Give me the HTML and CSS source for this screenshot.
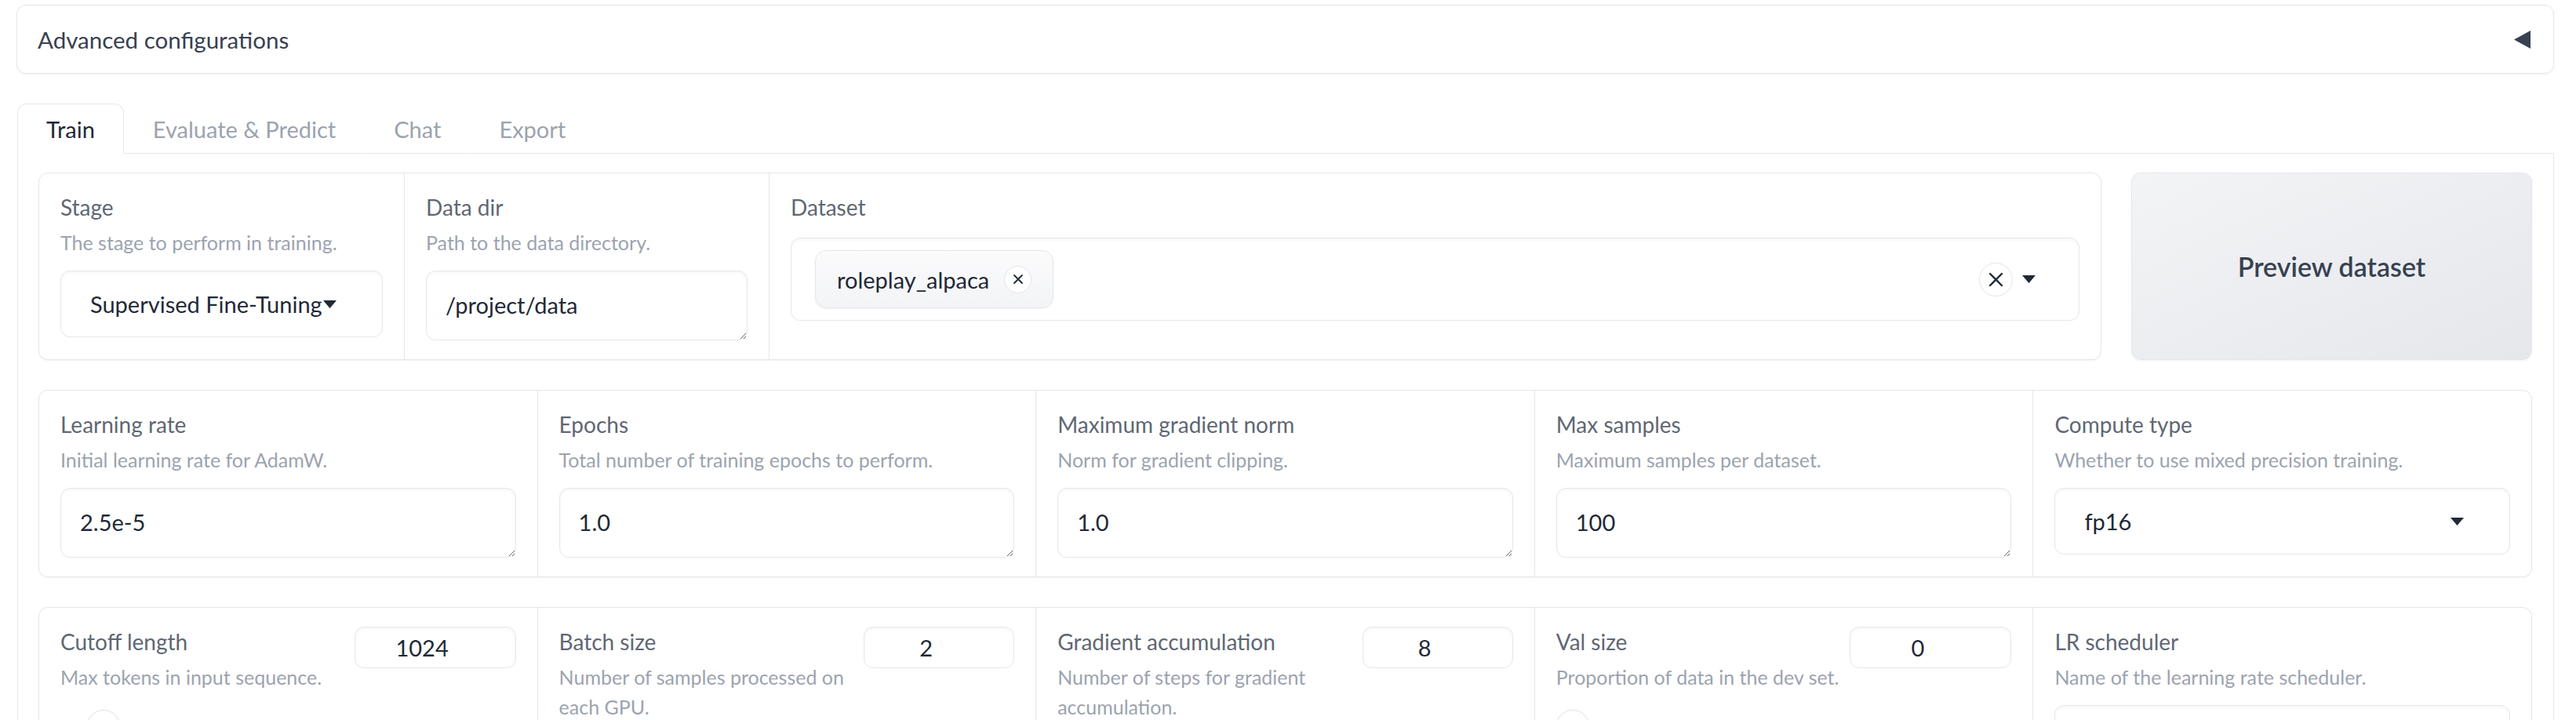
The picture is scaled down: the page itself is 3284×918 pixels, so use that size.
FILE: index.html
```html
<!DOCTYPE html>
<html lang="en">
<head>
<meta charset="utf-8">
<title>Advanced configurations</title>
<link rel="stylesheet" href="styles.css">
</head>
<body>
<div class="page">
  <div class="accordion">
    <span class="accordion-label">Advanced configurations</span>
    <svg class="accordion-icon" width="21" height="23" viewBox="0 0 21 23"><path d="M21 0V23L0 11.5Z"/></svg>
  </div>

  <div class="tabs">
    <div class="tab-nav">
      <button class="tab is-selected">Train</button>
      <button class="tab">Evaluate &amp; Predict</button>
      <button class="tab">Chat</button>
      <button class="tab">Export</button>
      <div class="tab-rest"></div>
    </div>

    <div class="tab-panel">
      <div class="row">
        <div class="group group-data">
          <div class="cell cell-stage">
            <div class="field-head">
              <div class="label">Stage</div>
              <div class="info">The stage to perform in training.</div>
            </div>
            <div class="dropdown">
              <span class="dropdown-value">Supervised Fine-Tuning</span>
              <svg class="caret" width="17" height="10" viewBox="0 0 17 10"><path d="M0 0H17L8.5 10Z"/></svg>
            </div>
          </div>
          <div class="cell cell-dir">
            <div class="field-head">
              <div class="label">Data dir</div>
              <div class="info">Path to the data directory.</div>
            </div>
            <textarea class="textbox" rows="1">/project/data</textarea>
          </div>
          <div class="cell cell-dataset">
            <div class="field-head label-only">
              <div class="label">Dataset</div>
            </div>
            <div class="multiselect">
              <span class="chip">roleplay_alpaca
                <span class="chip-remove"><svg width="14" height="14" viewBox="0 0 14 14"><path d="M2 2L12 12M12 2L2 12"/></svg></span>
              </span>
              <span class="spacer"></span>
              <span class="clear-btn"><svg width="19" height="19" viewBox="0 0 19 19"><path d="M2 2L17 17M17 2L2 17"/></svg></span>
              <svg class="caret" width="17" height="10" viewBox="0 0 17 10"><path d="M0 0H17L8.5 10Z"/></svg>
            </div>
          </div>
        </div>
        <button class="preview">Preview dataset</button>
      </div>

      <div class="row">
        <div class="group group-five">
          <div class="cell">
            <div class="field-head">
              <div class="label">Learning rate</div>
              <div class="info">Initial learning rate for AdamW.</div>
            </div>
            <textarea class="textbox" rows="1">2.5e-5</textarea>
          </div>
          <div class="cell">
            <div class="field-head">
              <div class="label">Epochs</div>
              <div class="info">Total number of training epochs to perform.</div>
            </div>
            <textarea class="textbox" rows="1">1.0</textarea>
          </div>
          <div class="cell">
            <div class="field-head">
              <div class="label">Maximum gradient norm</div>
              <div class="info">Norm for gradient clipping.</div>
            </div>
            <textarea class="textbox" rows="1">1.0</textarea>
          </div>
          <div class="cell">
            <div class="field-head">
              <div class="label">Max samples</div>
              <div class="info">Maximum samples per dataset.</div>
            </div>
            <textarea class="textbox" rows="1">100</textarea>
          </div>
          <div class="cell">
            <div class="field-head">
              <div class="label">Compute type</div>
              <div class="info">Whether to use mixed precision training.</div>
            </div>
            <div class="dropdown">
              <span class="dropdown-value">fp16</span>
              <svg class="caret" width="17" height="10" viewBox="0 0 17 10"><path d="M0 0H17L8.5 10Z"/></svg>
            </div>
          </div>
        </div>
      </div>

      <div class="row">
        <div class="group group-five">
          <div class="cell">
            <div class="slider-head">
              <div class="field-head">
                <div class="label">Cutoff length</div>
                <div class="info">Max tokens in input sequence.</div>
              </div>
              <input class="num num-wide" type="number" value="1024">
            </div>
            <input class="range" type="range" min="4" max="16384" value="1024">
          </div>
          <div class="cell">
            <div class="slider-head">
              <div class="field-head">
                <div class="label">Batch size</div>
                <div class="info">Number of samples processed on<br>each GPU.</div>
              </div>
              <input class="num num-narrow" type="number" value="2">
            </div>
            <input class="range" type="range" min="1" max="1024" value="2">
          </div>
          <div class="cell">
            <div class="slider-head">
              <div class="field-head">
                <div class="label">Gradient accumulation</div>
                <div class="info">Number of steps for gradient<br>accumulation.</div>
              </div>
              <input class="num num-narrow" type="number" value="8">
            </div>
            <input class="range" type="range" min="1" max="1024" value="8">
          </div>
          <div class="cell">
            <div class="slider-head">
              <div class="field-head">
                <div class="label">Val size</div>
                <div class="info">Proportion of data in the dev set.</div>
              </div>
              <input class="num num-wide" type="number" value="0">
            </div>
            <input class="range" type="range" min="0" max="1" step="0.001" value="0">
          </div>
          <div class="cell">
            <div class="field-head">
              <div class="label">LR scheduler</div>
              <div class="info">Name of the learning rate scheduler.</div>
            </div>
            <div class="dropdown">
              <span class="dropdown-value"></span>
              <svg class="caret" width="17" height="10" viewBox="0 0 17 10"><path d="M0 0H17L8.5 10Z"/></svg>
            </div>
          </div>
        </div>
      </div>
    </div>
  </div>
</div>
</body>
</html>
```

FILE: styles.css
```css
* {
  box-sizing: border-box;
}

html,
body {
  margin: 0;
  background: #ffffff;
}

body {
  font-family: Lato, "Open Sans", sans-serif;
  color: #1f2937;
}

.page {
  padding: 6px 28px 0 21px;
}

/* Accordion */
.accordion {
  display: flex;
  align-items: center;
  justify-content: space-between;
  height: 88px;
  padding: 0 29px 0 26px;
  border: 1px solid #e5e7eb;
  border-radius: 12px;
  box-shadow: 0 1px 3px rgba(0, 0, 0, 0.06);
}

.accordion-label {
  font-size: 29.5px;
  color: #374151;
}

.accordion-icon {
  display: block;
  fill: #374151;
}

/* Tabs */
.tabs {
  margin: 38px 0 0 1px;
}

.tab-nav {
  display: flex;
  height: 64px;
}

.tab {
  height: 64px;
  margin: 0;
  padding: 0 36px;
  border: 1px solid transparent;
  border-bottom-color: #e5e7eb;
  background: none;
  font-family: Lato, "Open Sans", sans-serif;
  font-size: 29px;
  color: #9ca3af;
}

.tab.is-selected {
  border-color: #e5e7eb;
  border-bottom-color: #ffffff;
  border-radius: 12px 12px 0 0;
  background: #ffffff;
  color: #1f2937;
}

.tab-rest {
  flex: 1;
  border-bottom: 1px solid #e5e7eb;
}

.tab-panel {
  display: flex;
  flex-direction: column;
  gap: 38px;
  padding: 24px 27px 30px 26px;
  border: 1px solid #e5e7eb;
  border-top: none;
  border-radius: 0 0 12px 12px;
}

/* Rows & groups */
.row {
  display: flex;
  gap: 38px;
}

.group {
  flex: 1;
  display: flex;
  min-width: 0;
  border: 1px solid #e5e7eb;
  border-radius: 12px;
  background: #ffffff;
  box-shadow: 0 1px 2px rgba(0, 0, 0, 0.05);
}

.cell {
  min-width: 0;
  padding: 24px 27px;
  border-right: 1px solid #e5e7eb;
}

.cell:last-child {
  border-right: none;
}

.cell-stage {
  flex: none;
  width: 466px;
}

.cell-dir {
  flex: none;
  width: 465px;
}

.cell-dataset {
  flex: 1;
}

.group-five .cell {
  flex: 1;
}

/* Labels */
.field-head {
  margin-bottom: 17px;
}

.field-head.label-only {
  margin-bottom: 20px;
}

.label {
  font-size: 28px;
  line-height: 38px;
  color: #5f6774;
  white-space: nowrap;
}

.info {
  margin-top: 7px;
  font-size: 25px;
  line-height: 38px;
  color: #9ca3af;
}

/* Dropdown */
.dropdown {
  display: flex;
  align-items: center;
  height: 85px;
  padding: 0 58px 0 37px;
  border: 1px solid #e5e7eb;
  border-radius: 12px;
  box-shadow: inset 0 2px 4px rgba(0, 0, 0, 0.04);
  font-size: 29px;
  color: #1f2937;
}

.dropdown-value {
  flex: 1;
  min-width: 0;
  overflow: hidden;
  white-space: nowrap;
}

.caret {
  flex: none;
  display: block;
  fill: #1f2937;
}

/* Multiselect */
.multiselect {
  display: flex;
  align-items: center;
  gap: 12px;
  padding: 15px 55px 15px 30px;
  border: 1px solid #e5e7eb;
  border-radius: 12px;
  box-shadow: inset 0 2px 4px rgba(0, 0, 0, 0.04);
}

.chip {
  display: flex;
  align-items: center;
  gap: 19px;
  height: 74px;
  padding: 0 27px;
  border: 1px solid #e5e7eb;
  border-radius: 14px;
  background: linear-gradient(to top, #f3f4f6, #fbfbfc);
  font-size: 29px;
  color: #1f2937;
  box-shadow: 0 1px 2px rgba(0, 0, 0, 0.04);
}

.chip-remove {
  display: flex;
  align-items: center;
  justify-content: center;
  width: 35px;
  height: 35px;
  border: 1px solid #e2e4e9;
  border-radius: 50%;
  background: #ffffff;
}

.chip-remove svg,
.clear-btn svg {
  display: block;
  fill: none;
  stroke: #1f2937;
  stroke-width: 1.8;
  stroke-linecap: round;
}

.clear-btn svg {
  stroke-width: 2.4;
}

.spacer {
  flex: 1;
}

.clear-btn {
  display: flex;
  align-items: center;
  justify-content: center;
  width: 43px;
  height: 43px;
  border: 1px solid #e2e4e9;
  border-radius: 50%;
  background: #ffffff;
}

/* Textbox */
.textbox {
  display: block;
  width: 100%;
  height: 89px;
  margin: 0;
  padding: 23px 24px;
  border: 1px solid #e5e7eb;
  border-radius: 12px;
  box-shadow: inset 0 2px 4px rgba(0, 0, 0, 0.04);
  font-family: Lato, "Open Sans", sans-serif;
  font-size: 29px;
  line-height: 40px;
  color: #1f2937;
  background: #ffffff;
  resize: vertical;
  outline: none;
}

/* Button */
.preview {
  flex: none;
  width: 511px;
  margin: 0;
  border: 1px solid #e5e7eb;
  border-radius: 12px;
  background: linear-gradient(to bottom right, #f3f4f6, #e5e7eb);
  box-shadow: 0 1px 2px rgba(0, 0, 0, 0.05);
  font-family: Lato, "Open Sans", sans-serif;
  font-size: 34px;
  font-weight: 600;
  color: #374151;
}

/* Slider */
.slider-head {
  display: flex;
  align-items: flex-start;
  justify-content: space-between;
  gap: 8px;
}

.slider-head .field-head {
  min-width: 0;
  margin-bottom: 0;
}

.slider-head .info {
  white-space: nowrap;
}

.num {
  flex: none;
  height: 53px;
  margin: 0;
  padding: 0 33px 0 0;
  border: 1px solid #e5e7eb;
  border-radius: 12px;
  box-shadow: inset 0 2px 4px rgba(0, 0, 0, 0.04);
  background: #ffffff;
  text-align: center;
  font-family: Lato, "Open Sans", sans-serif;
  font-size: 29px;
  color: #1f2937;
  outline: none;
  -moz-appearance: textfield;
}

.num::-webkit-inner-spin-button,
.num::-webkit-outer-spin-button {
  -webkit-appearance: none;
  margin: 0;
}

.num-wide {
  width: 206px;
}

.num-narrow {
  width: 192px;
}

.range {
  -webkit-appearance: none;
  appearance: none;
  display: block;
  width: 100%;
  height: 42px;
  margin: 23px 0 0;
  background: transparent;
}

.range::-webkit-slider-runnable-track {
  height: 10px;
  border-radius: 5px;
  background: #e5e7eb;
}

.range::-webkit-slider-thumb {
  -webkit-appearance: none;
  width: 42px;
  height: 42px;
  margin-top: -16px;
  border: 1px solid #e5e7eb;
  border-radius: 50%;
  background: #ffffff;
  box-shadow: 0 1px 3px rgba(0, 0, 0, 0.12);
}
```
